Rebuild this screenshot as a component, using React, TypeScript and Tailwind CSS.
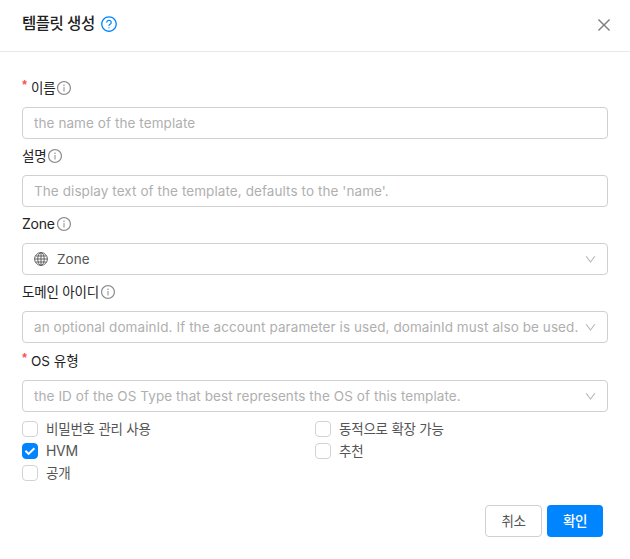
import type { ReactNode } from "react";
import {
  AiOutlineClose,
  AiOutlineDown,
  AiOutlineInfoCircle,
  AiOutlineQuestionCircle,
} from "react-icons/ai";

type LabelProps = { text: string; required?: boolean; info?: boolean; spacing?: string };

function Label({ text, required, info, spacing = "text-[13.5px] tracking-[-0.2px]" }: LabelProps) {
  return (
    <div className="flex h-9 items-center pb-0.5 text-[14px] text-[#222]">
      {required && (
        <span className="mr-1 -ml-px h-[22px] w-1.5 font-['Liberation_Mono'] text-[12px] leading-[19px] font-bold text-[#ff4d4f]">
          *
        </span>
      )}
      <span className={`whitespace-nowrap ${spacing}`}>{text}</span>
      {info && <AiOutlineInfoCircle className="ml-px size-4 text-[#8c8c8c]" />}
    </div>
  );
}

function Field({ children, select }: { children: ReactNode; select?: boolean }) {
  return (
    <div className="flex h-8 items-center rounded-[4px] border border-[#d0d0d0] px-[11px] text-[13.5px] tracking-[0.08px] text-[#afafaf]">
      <div className="flex w-0 flex-1 items-center whitespace-nowrap">{children}</div>
      {select && <AiOutlineDown className="-mr-px size-[13px] shrink-0 text-[#b8b8b8]" />}
    </div>
  );
}

function Globe() {
  return (
    <svg viewBox="0 0 14 14" className="mr-[9px] size-[14px] shrink-0 text-[#555]" fill="none" stroke="currentColor" strokeWidth="0.9">
      <circle cx="7" cy="7" r="6.4" />
      <ellipse cx="7" cy="7" rx="3.2" ry="6.4" />
      <path d="M7 .6v12.8M.6 7h12.8M1.6 4h10.8M1.6 10h10.8" />
    </svg>
  );
}

function Check({ text, checked, spacing = "text-[13.5px] tracking-[-0.22px]" }: { text: string; checked?: boolean; spacing?: string }) {
  return (
    <label className="flex h-[22px] items-center gap-2 text-[14px] text-[#555]">
      <span
        className={`flex size-4 items-center justify-center rounded-[4px] border ${
          checked ? "border-[#0085ff] bg-[#0085ff]" : "border-[#d3d3d3] bg-white"
        }`}
      >
        {checked && (
          <svg viewBox="0 0 12 12" className="size-3 shrink-0" fill="none" stroke="white" strokeWidth="2">
            <path d="M1.4 5.7 4.6 8.9 10.4 3.2" />
          </svg>
        )}
      </span>
      <span className={spacing}>{text}</span>
    </label>
  );
}

export default function App() {
  return (
    <main className="h-[559px] w-[630px] overflow-hidden bg-white font-[Inter,'Noto_Sans_CJK_KR',sans-serif] leading-[22px]">
      <header className="flex h-[52px] items-center justify-between border-b border-[#e8e8e8] pr-[17px] pb-[3px] pl-[22px]">
        <h1 className="flex items-center text-[15.5px] font-medium text-[#222]">
          <span className="tracking-[-0.45px]">템플릿 생성</span>
          <AiOutlineQuestionCircle className="ml-[5px] size-[18px] text-[#0085ff]" />
        </h1>
        <AiOutlineClose className="mt-0.5 size-[18px] text-[#808080]" />
      </header>

      <form className="px-[22px] pt-[19px]">
        <Label text="이름" required info />
        <Field>the name of the template</Field>
        <Label text="설명" info />
        <Field>The display text of the template, defaults to the 'name'.</Field>
        <Label text="Zone" info spacing="tracking-[-0.2px]" />
        <Field select>
          <Globe />
          <span className="text-[#555]">Zone</span>
        </Field>
        <Label text="도메인 아이디" info />
        <Field select>an optional domainId. If the account parameter is used, domainId must also be used.</Field>
        <div className="pt-px">
          <Label text="OS 유형" required spacing="text-[13.5px]" />
        </div>
        <Field select>the ID of the OS Type that best represents the OS of this template.</Field>

        <div className="mt-1.5 grid grid-cols-2">
          <Check text="비밀번호 관리 사용" />
          <Check text="동적으로 확장 가능" />
          <Check text="HVM" checked spacing="tracking-[-0.3px]" />
          <Check text="추천" />
          <Check text="공개" />
        </div>

        <div className="mt-[21px] flex justify-end gap-[5px] pr-[5px] text-[13.5px] tracking-[-0.3px]">
          <button type="button" className="h-8 w-[57px] rounded-[4px] border border-[#d0d0d0] text-[#555]">
            취소
          </button>
          <button type="button" className="h-8 w-14 rounded-[4px] bg-[#0085ff] font-medium text-white">
            확인
          </button>
        </div>
      </form>
    </main>
  );
}
